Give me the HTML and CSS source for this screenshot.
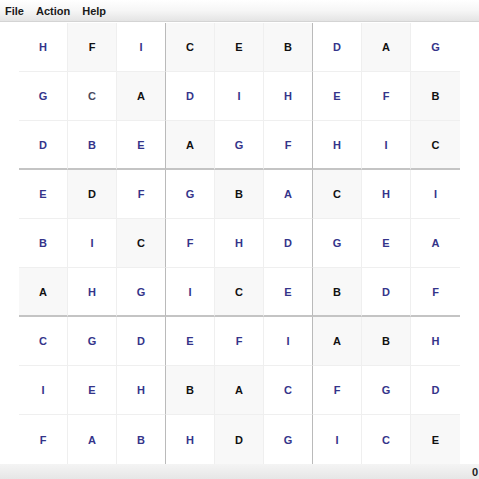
FILE: index.html
```html
<!DOCTYPE html>
<html>
<head>
<meta charset="utf-8">
<link rel="stylesheet" href="styles.css">
</head>
<body>
<div class="app">
  <div class="menubar">
    <span class="menu">File</span>
    <span class="menu">Action</span>
    <span class="menu">Help</span>
  </div>
  <div class="main">
    <div class="board">
      <div class="cell">H</div><div class="cell given">F</div><div class="cell">I</div><div class="cell given">C</div><div class="cell given">E</div><div class="cell given">B</div><div class="cell">D</div><div class="cell given">A</div><div class="cell">G</div>
      <div class="cell">G</div><div class="cell gray">C</div><div class="cell given">A</div><div class="cell">D</div><div class="cell">I</div><div class="cell">H</div><div class="cell">E</div><div class="cell">F</div><div class="cell given">B</div>
      <div class="cell">D</div><div class="cell">B</div><div class="cell">E</div><div class="cell given">A</div><div class="cell">G</div><div class="cell">F</div><div class="cell">H</div><div class="cell">I</div><div class="cell given">C</div>
      <div class="cell">E</div><div class="cell given">D</div><div class="cell">F</div><div class="cell">G</div><div class="cell given">B</div><div class="cell">A</div><div class="cell given">C</div><div class="cell">H</div><div class="cell">I</div>
      <div class="cell">B</div><div class="cell">I</div><div class="cell given">C</div><div class="cell">F</div><div class="cell">H</div><div class="cell">D</div><div class="cell">G</div><div class="cell">E</div><div class="cell">A</div>
      <div class="cell given">A</div><div class="cell">H</div><div class="cell">G</div><div class="cell">I</div><div class="cell given">C</div><div class="cell">E</div><div class="cell given">B</div><div class="cell">D</div><div class="cell">F</div>
      <div class="cell">C</div><div class="cell">G</div><div class="cell">D</div><div class="cell">E</div><div class="cell">F</div><div class="cell">I</div><div class="cell given">A</div><div class="cell given">B</div><div class="cell">H</div>
      <div class="cell">I</div><div class="cell">E</div><div class="cell">H</div><div class="cell given">B</div><div class="cell given">A</div><div class="cell">C</div><div class="cell">F</div><div class="cell">G</div><div class="cell">D</div>
      <div class="cell">F</div><div class="cell">A</div><div class="cell">B</div><div class="cell">H</div><div class="cell given">D</div><div class="cell">G</div><div class="cell">I</div><div class="cell">C</div><div class="cell given">E</div>
    </div>
  </div>
  <div class="statusbar"><span class="count">0</span></div>
</div>
</body>
</html>
```
FILE: styles.css
```css
html, body {
  margin: 0;
  padding: 0;
  background: #ffffff;
}
.app {
  width: 479px;
  height: 479px;
  display: flex;
  flex-direction: column;
  font-family: "Liberation Sans", Arial, sans-serif;
  overflow: hidden;
}
.menubar {
  height: 21px;
  border-bottom: 1px solid #d4d4d4;
  background: linear-gradient(to bottom, #ffffff 0%, #f6f6f6 50%, #e4e4e4 100%);
  display: flex;
  align-items: center;
  gap: 12px;
  padding-left: 5px;
  font-size: 11px;
  font-weight: bold;
  color: #1a1a1a;
}
.main {
  flex: 1;
  padding-top: 1px;
  padding-left: 19px;
}
.board {
  display: grid;
  grid-template-columns: repeat(9, 49px);
  grid-template-rows: repeat(9, 49px);
}
.cell {
  box-sizing: border-box;
  border-right: 1px solid #efefef;
  border-bottom: 1px solid #efefef;
  display: flex;
  align-items: center;
  justify-content: center;
  font-size: 11px;
  font-weight: bold;
  color: #34348a;
  background: #ffffff;
}
.cell.given {
  color: #111111;
  background: #f8f8f8;
}
.cell.gray {
  color: #4a4a5e;
}
.cell:nth-child(9n+3),
.cell:nth-child(9n+6) {
  border-right-color: #bababa;
}
.cell:nth-child(9n) {
  border-right: none;
}
.cell:nth-child(n+19):nth-child(-n+27),
.cell:nth-child(n+46):nth-child(-n+54) {
  border-bottom: 2px solid #c4c4c4;
}
.cell:nth-child(n+73) {
  border-bottom: none;
}
.statusbar {
  height: 15px;
  background: linear-gradient(to bottom, #f4f4f4 0%, #e6e6e6 100%);
  display: flex;
  align-items: center;
  justify-content: flex-end;
  padding-right: 1px;
  font-size: 11px;
  font-weight: bold;
  color: #222222;
}
```
